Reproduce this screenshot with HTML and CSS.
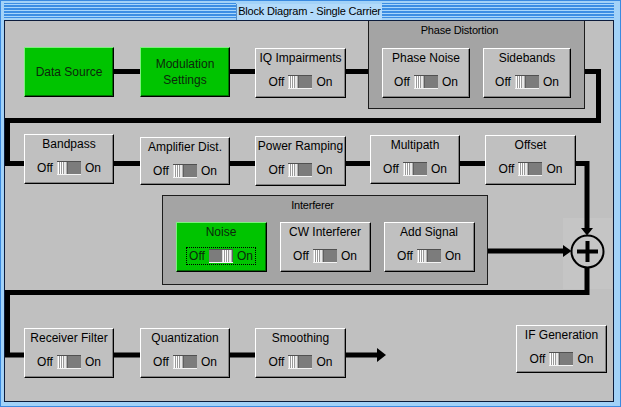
FILE: index.html
```html
<!DOCTYPE html>
<html>
<head>
<meta charset="utf-8">
<title>Block Diagram - Single Carrier</title>
<link rel="stylesheet" href="styles.css">
</head>
<body>
<div class="window">
  <div class="titlebar">
    <div class="stripes"></div>
    <div class="title">Block Diagram - Single Carrier</div>
    <div class="stripes"></div>
  </div>
  <div class="content">
    <svg class="wires" viewBox="5 21 608 380" width="608" height="380">
      <rect x="563" y="218" width="49" height="71" fill="#c5c5c5"/>
      <g fill="none" stroke="#000" stroke-width="5" stroke-linejoin="miter">
        <path d="M60 71.5 H598.5 V120.5 H7.5 V163.5 H587 V229"/>
        <path d="M480 251 H564"/>
        <path d="M587 267 V292.5 H7.5 V355 H378"/>
      </g>
      <polygon points="581,228 593,228 587,235.5" fill="#000"/>
      <polygon points="563,245 563,257 571.5,251" fill="#000"/>
      <polygon points="377,348 377,362 386,355" fill="#000"/>
      <circle cx="587.5" cy="251.5" r="16" fill="none" stroke="#000" stroke-width="2"/>
      <path d="M577 251.5 H598 M587.5 241 V262" stroke="#000" stroke-width="4"/>
    </svg>

    <div class="block green b-datasource"><div class="glabel">Data Source</div></div>
    <div class="block green b-modulation"><div class="glabel">Modulation<br>Settings</div></div>

    <div class="block b-iq">
      <div class="label">IQ Impairments</div>
      <div class="toggle"><span>Off</span><span class="sw"><span class="thumb"></span><span class="track"></span></span><span>On</span></div>
    </div>

    <div class="group g-phase">
      <div class="group-title t-phase">Phase Distortion</div>
      <div class="group-row r-phase">
        <div class="block w88">
          <div class="label">Phase Noise</div>
          <div class="toggle"><span>Off</span><span class="sw"><span class="thumb"></span><span class="track"></span></span><span>On</span></div>
        </div>
        <div class="block w88">
          <div class="label">Sidebands</div>
          <div class="toggle"><span>Off</span><span class="sw"><span class="thumb"></span><span class="track"></span></span><span>On</span></div>
        </div>
      </div>
    </div>

    <div class="block b-bandpass">
      <div class="label">Bandpass</div>
      <div class="toggle"><span>Off</span><span class="sw"><span class="thumb"></span><span class="track"></span></span><span>On</span></div>
    </div>
    <div class="block b-amp">
      <div class="label">Amplifier Dist.</div>
      <div class="toggle"><span>Off</span><span class="sw"><span class="thumb"></span><span class="track"></span></span><span>On</span></div>
    </div>
    <div class="block b-power">
      <div class="label">Power Ramping</div>
      <div class="toggle"><span>Off</span><span class="sw"><span class="thumb"></span><span class="track"></span></span><span>On</span></div>
    </div>
    <div class="block b-multipath">
      <div class="label">Multipath</div>
      <div class="toggle"><span>Off</span><span class="sw"><span class="thumb"></span><span class="track"></span></span><span>On</span></div>
    </div>
    <div class="block b-offset">
      <div class="label">Offset</div>
      <div class="toggle"><span>Off</span><span class="sw"><span class="thumb"></span><span class="track"></span></span><span>On</span></div>
    </div>

    <div class="group g-interferer">
      <div class="group-title t-interferer">Interferer</div>
      <div class="group-row r-interferer">
        <div class="block green-on w91">
          <div class="label">Noise</div>
          <div class="toggle focus"><span>Off</span><span class="sw"><span class="track"></span><span class="thumb"></span></span><span>On</span></div>
        </div>
        <div class="block w91">
          <div class="label">CW Interferer</div>
          <div class="toggle"><span>Off</span><span class="sw"><span class="thumb"></span><span class="track"></span></span><span>On</span></div>
        </div>
        <div class="block w91">
          <div class="label">Add Signal</div>
          <div class="toggle"><span>Off</span><span class="sw"><span class="thumb"></span><span class="track"></span></span><span>On</span></div>
        </div>
      </div>
    </div>

    <div class="block b-receiver">
      <div class="label">Receiver Filter</div>
      <div class="toggle"><span>Off</span><span class="sw"><span class="thumb"></span><span class="track"></span></span><span>On</span></div>
    </div>
    <div class="block b-quant">
      <div class="label">Quantization</div>
      <div class="toggle"><span>Off</span><span class="sw"><span class="thumb"></span><span class="track"></span></span><span>On</span></div>
    </div>
    <div class="block b-smooth">
      <div class="label">Smoothing</div>
      <div class="toggle"><span>Off</span><span class="sw"><span class="thumb"></span><span class="track"></span></span><span>On</span></div>
    </div>
    <div class="block b-ifgen">
      <div class="label">IF Generation</div>
      <div class="toggle"><span>Off</span><span class="sw"><span class="thumb"></span><span class="track"></span></span><span>On</span></div>
    </div>
  </div>
</div>
</body>
</html>
```

FILE: styles.css
```css
html, body {
  margin: 0;
  padding: 0;
  background: #9fd0f8;
}

body {
  font-family: "Liberation Sans", Arial, sans-serif;
  color: #000;
}

.window {
  width: 621px;
  height: 407px;
  box-sizing: border-box;
  border: 1px solid #3a8ae0;
  background: #a2d2f8;
  padding: 0 6px 4px 3px;
  display: flex;
  flex-direction: column;
}

.titlebar {
  height: 19px;
  flex: none;
  display: flex;
  align-items: flex-start;
  padding-top: 2px;
  box-sizing: border-box;
}

.stripes {
  flex: 1;
  height: 15px;
  background: repeating-linear-gradient(to bottom, #3c8ee4 0 1px, #a8d6fb 1px 2px, #3c8ee4 2px 3px);
}

.title {
  width: 146px;
  height: 16px;
  margin-top: 1px;
  background: #b2dafa;
  border-left: 1px solid #5a90c8;
  box-sizing: border-box;
  font-size: 11px;
  letter-spacing: -0.2px;
  line-height: 15px;
  text-align: center;
  white-space: nowrap;
}

.content {
  flex: 1;
  position: relative;
  background: #c0c0c0;
  border: 1px solid #0c1c3c;
  overflow: hidden;
}

.wires {
  position: absolute;
  left: 0;
  top: 0;
}

/* blocks */
.block {
  position: absolute;
  box-sizing: border-box;
  width: 90px;
  height: 50px;
  display: flex;
  flex-direction: column;
  align-items: center;
  padding-top: 2px;
  background: #c0c0c0;
  border-top: 1px solid #fff;
  border-left: 1px solid #fff;
  border-right: 1px solid #000;
  border-bottom: 1px solid #000;
  box-shadow: inset -1px -1px 0 #808080;
}

.label {
  font-size: 12px;
  line-height: 14px;
  white-space: nowrap;
}

.toggle {
  margin-top: 9px;
  height: 16px;
  display: flex;
  align-items: center;
  gap: 4px;
  font-size: 12px;
  line-height: 14px;
  padding: 0 2px;
}

.toggle.focus {
  outline: 1px dotted #000;
  outline-offset: 0;
}

.sw {
  display: flex;
  width: 24px;
  height: 14px;
  box-sizing: border-box;
  border-top: 1px solid #505050;
  border-bottom: 1px solid #f4f4f4;
}

.thumb {
  width: 11px;
  background: linear-gradient(to right,
    #d8d8d8 0 1px,
    #ffffff 1px 2px,
    #9a9a9a 2px 3px,
    #ffffff 3px 4px,
    #9a9a9a 4px 5px,
    #ffffff 5px 6px,
    #9a9a9a 6px 7px,
    #e8e8e8 7px 9px,
    #b0b0b0 9px 10px,
    #606060 10px 11px);
}

.track {
  flex: 1;
  background: #7c7c7c;
}

.green {
  background: #00c400;
  border-top-color: #7ef07e;
  border-left-color: #7ef07e;
  box-shadow: inset -1px -1px 0 #007000;
  justify-content: center;
  padding-top: 0;
}

.glabel {
  font-size: 12px;
  line-height: 16px;
  text-align: center;
  color: #0c280c;
}

.green-on {
  background: #00c400;
  border-top-color: #7ef07e;
  border-left-color: #7ef07e;
  box-shadow: inset -1px -1px 0 #007000;
  color: #0c280c;
}

/* groups */
.group {
  position: absolute;
  box-sizing: border-box;
  background: #a4a4a4;
  border: 1px solid #1c1c1c;
  display: flex;
  flex-direction: column;
  align-items: center;
  padding-top: 3px;
}

.group .block {
  position: static;
}

.group-title {
  font-size: 11px;
  letter-spacing: -0.2px;
  line-height: 13px;
  white-space: nowrap;
}

.group-row {
  display: flex;
  gap: 13px;
}

.t-phase { margin-right: 34px; }
.r-phase { margin-top: 11px; }
.t-interferer { margin-right: 25px; }
.r-interferer { margin-top: 10px; }

.w88 { width: 88px; }
.w91 { width: 91px; }

/* diagram node placement (canvas coordinates) */
.b-datasource { left: 19px; top: 26px; }
.b-modulation { left: 135px; top: 26px; }
.b-iq { left: 250px; top: 27px; width: 91px; }
.g-phase { left: 363px; top: -1px; width: 217px; height: 89px; }

.b-bandpass { left: 19px; top: 113px; }
.b-amp { left: 135px; top: 116px; height: 48px; }
.b-power { left: 250px; top: 115px; width: 91px; }
.b-multipath { left: 365px; top: 114px; height: 49px; }
.b-offset { left: 480px; top: 114px; width: 91px; }

.g-interferer { left: 157px; top: 174px; width: 326px; height: 90px; }

.b-receiver { left: 19px; top: 307px; }
.b-quant { left: 135px; top: 307px; }
.b-smooth { left: 250px; top: 307px; width: 91px; }
.b-ifgen { left: 511px; top: 304px; width: 91px; height: 48px; }
```
